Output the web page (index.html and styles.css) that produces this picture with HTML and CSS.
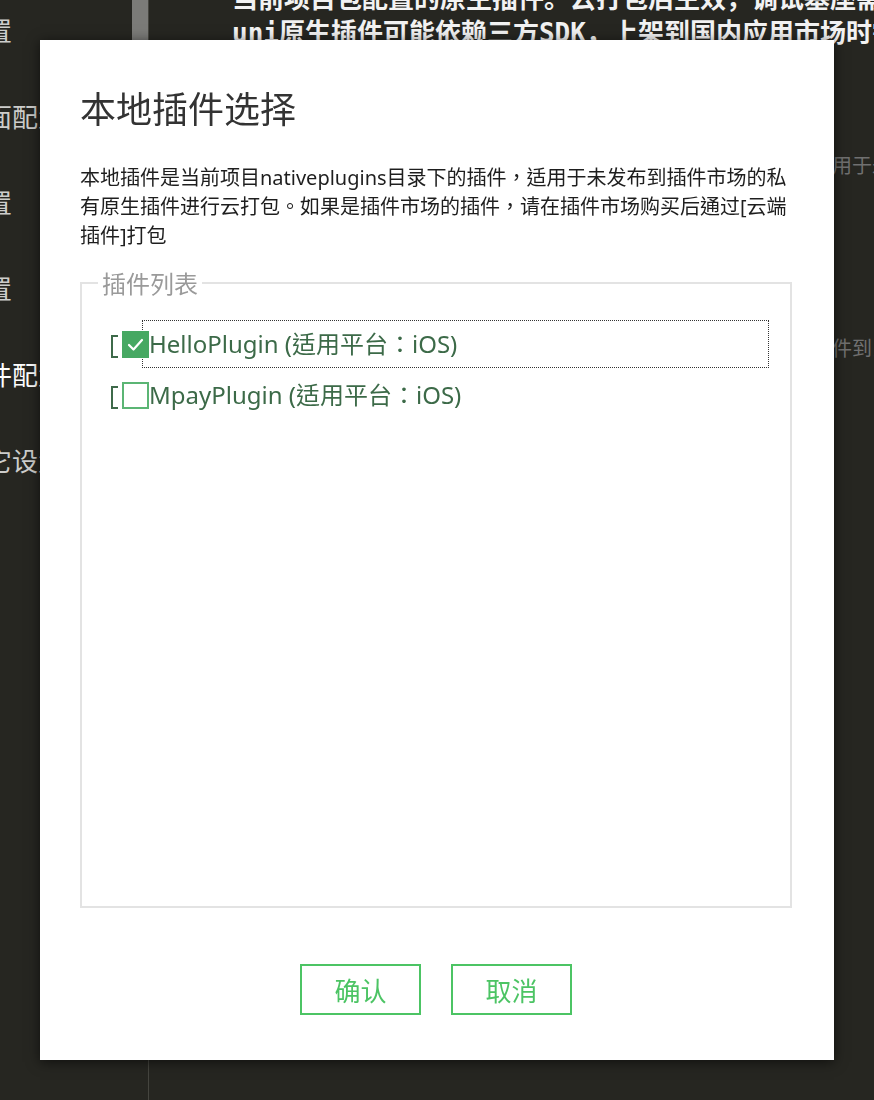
FILE: index.html
```html
<!DOCTYPE html>
<html lang="zh-CN">
<head>
  <meta charset="UTF-8" />
  <meta name="viewport" content="width=device-width, initial-scale=1.0"/>
  <title>本地插件选择</title>
  <link rel="stylesheet" href="styles.css">
</head>
<body>

<div class="app">
  <!-- Side navigation of the manifest editor -->
  <div class="sidebar">
    <div class="scroll-thumb"></div>
    <div class="nav-list">
      <div class="nav-item">基础配置</div>
      <div class="nav-item">启动界面配置</div>
      <div class="nav-item">模块配置</div>
      <div class="nav-item">权限配置</div>
      <div class="nav-item active">原生插件配置</div>
      <div class="nav-item">常用其它设置</div>
    </div>
  </div>

  <!-- Page content behind the dialog -->
  <div class="page">
    <div class="page-line">当前项目包配置的原生插件。云打包后生效，调试基座需重新制作</div>
    <div class="page-line">uni原生插件可能依赖三方SDK，上架到国内应用市场时需注意隐私合规</div>
    <div class="page-note first">本地插件是指放置在当前项目原生插件目录中的插件，这类插件仅适用于未发布到插件市场的私有原生插件</div>
    <div class="page-note second">云端插件是指已经在插件市场中购买或试用的插件，需要先绑定该插件到当前项目后才能使用</div>
  </div>
</div>

<!-- Dialog -->
<div class="dialog">
  <h1 class="dialog-title">本地插件选择</h1>
  <p class="dialog-desc">本地插件是当前项目nativeplugins目录下的插件，适用于未发布到插件市场的私<br>有原生插件进行云打包。如果是插件市场的插件，请在插件市场购买后通过[云端<br>插件]打包</p>

  <fieldset class="plugin-box">
    <legend>插件列表</legend>
    <div class="plugin-list">
      <div class="plugin-row">
        <span class="bracket"></span>
        <span class="check checked">
          <svg width="23" height="23" viewBox="0 0 23 23"><polyline points="5,12 9.5,16.5 18,7" fill="none" stroke="#fff" stroke-width="2.2" stroke-linecap="round" stroke-linejoin="round"/></svg>
        </span>
        <span class="plugin-name focused">HelloPlugin (适用平台：iOS)</span>
      </div>
      <div class="plugin-row">
        <span class="bracket"></span>
        <span class="check"></span>
        <span class="plugin-name">MpayPlugin (适用平台：iOS)</span>
      </div>
    </div>
  </fieldset>

  <div class="dialog-actions">
    <button class="btn">确认</button>
    <button class="btn">取消</button>
  </div>
</div>

</body>
</html>
```

FILE: styles.css
```css
/* Global styles */
body {
  margin: 0;
  height: 1100px;
  overflow: hidden;
  background-color: #262621;
  font-family: "Noto Sans CJK SC", sans-serif;
}

.app {
  display: flex;
  height: 100%;
}

/* Sidebar */
.sidebar {
  position: relative;
  width: 148px;
  flex-shrink: 0;
  border-right: 1px solid #45453f;
  overflow: hidden;
}

.scroll-thumb {
  position: absolute;
  top: 0;
  right: 0;
  width: 16px;
  height: 60px;
  background-color: #7b7b78;
}

.nav-list {
  margin: -13px 0 0 -92px;
}

.nav-item {
  font-size: 26px;
  line-height: 86px;
  color: #cdcdcb;
  white-space: nowrap;
}

.nav-item.active {
  color: #fff;
}

/* Page behind */
.page {
  flex: 1;
  padding-left: 83px;
  margin-top: -18px;
  overflow: hidden;
}

.page-line {
  font-family: "DejaVu Sans Mono", "Noto Sans CJK SC", monospace;
  font-size: 26px;
  font-weight: bold;
  line-height: 34px;
  color: #f2f2f2;
  white-space: nowrap;
}

.page-note {
  font-size: 20px;
  line-height: 30px;
  color: #707070;
  white-space: nowrap;
}

.page-note.first {
  margin-top: 100px;
}

.page-note.second {
  margin-top: 153px;
}

/* Dialog */
.dialog {
  position: fixed;
  top: 40px;
  left: 40px;
  width: 794px;
  height: 1020px;
  box-sizing: border-box;
  padding: 47px 42px 0 40px;
  background-color: #fff;
  box-shadow: 0 2px 12px rgba(0, 0, 0, 0.6);
  font-family: "Noto Sans", "Noto Sans CJK TC", sans-serif;
  display: flex;
  flex-direction: column;
}

.dialog-title {
  margin: 0;
  font-family: "Noto Sans CJK SC", sans-serif;
  font-size: 36px;
  font-weight: normal;
  line-height: 40px;
  color: #333;
}

/* centred full-width punctuation, as on the desktop client */
.dialog-desc,
.plugin-name {
  font-feature-settings: "locl" 0;
}

.dialog-desc {
  margin: 36px 0 0;
  font-size: 20px;
  line-height: 29px;
  color: #1e1e1e;
}

.plugin-box {
  margin: 18px 0 0;
  min-width: 0;
  height: 640px;
  box-sizing: border-box;
  border: 2px solid #e3e3e3;
  padding: 22px 0 0 16px;
}

.plugin-box legend {
  padding: 0 4px;
  font-family: "Noto Sans CJK SC", sans-serif;
  font-size: 24px;
  line-height: 30px;
  color: #9a9a9a;
}

.plugin-list {
  display: flex;
  flex-direction: column;
  gap: 3px;
  margin-left: 13px;
}

.plugin-row {
  display: flex;
  align-items: center;
  height: 48px;
}

.bracket {
  width: 7px;
  height: 23px;
  box-sizing: border-box;
  border: 2px solid #3e6a4a;
  border-right: 0;
  margin: 4px 4px 0 0;
}

.check {
  position: relative;
  z-index: 1;
  width: 27px;
  height: 27px;
  box-sizing: border-box;
  border: 2px solid #5bb574;
  background-color: #fff;
  display: flex;
  align-items: center;
  justify-content: center;
}

.check.checked {
  border-color: #46a862;
  background-color: #46a862;
}

.plugin-name {
  margin-left: -7px;
  padding-left: 6px;
  width: 627px;
  height: 48px;
  box-sizing: border-box;
  border: 1px dotted transparent;
  font-size: 24px;
  line-height: 46px;
  color: #3c6a48;
  white-space: nowrap;
}

.plugin-name.focused {
  border-color: #333;
}

/* Buttons */
.dialog-actions {
  display: flex;
  justify-content: center;
  gap: 30px;
  margin-top: 56px;
}

.btn {
  width: 121px;
  height: 51px;
  padding: 0;
  border: 2px solid #4cc464;
  background-color: #fff;
  color: #4cc464;
  font-family: "Noto Sans CJK SC", sans-serif;
  font-size: 26px;
  cursor: pointer;
}
```
